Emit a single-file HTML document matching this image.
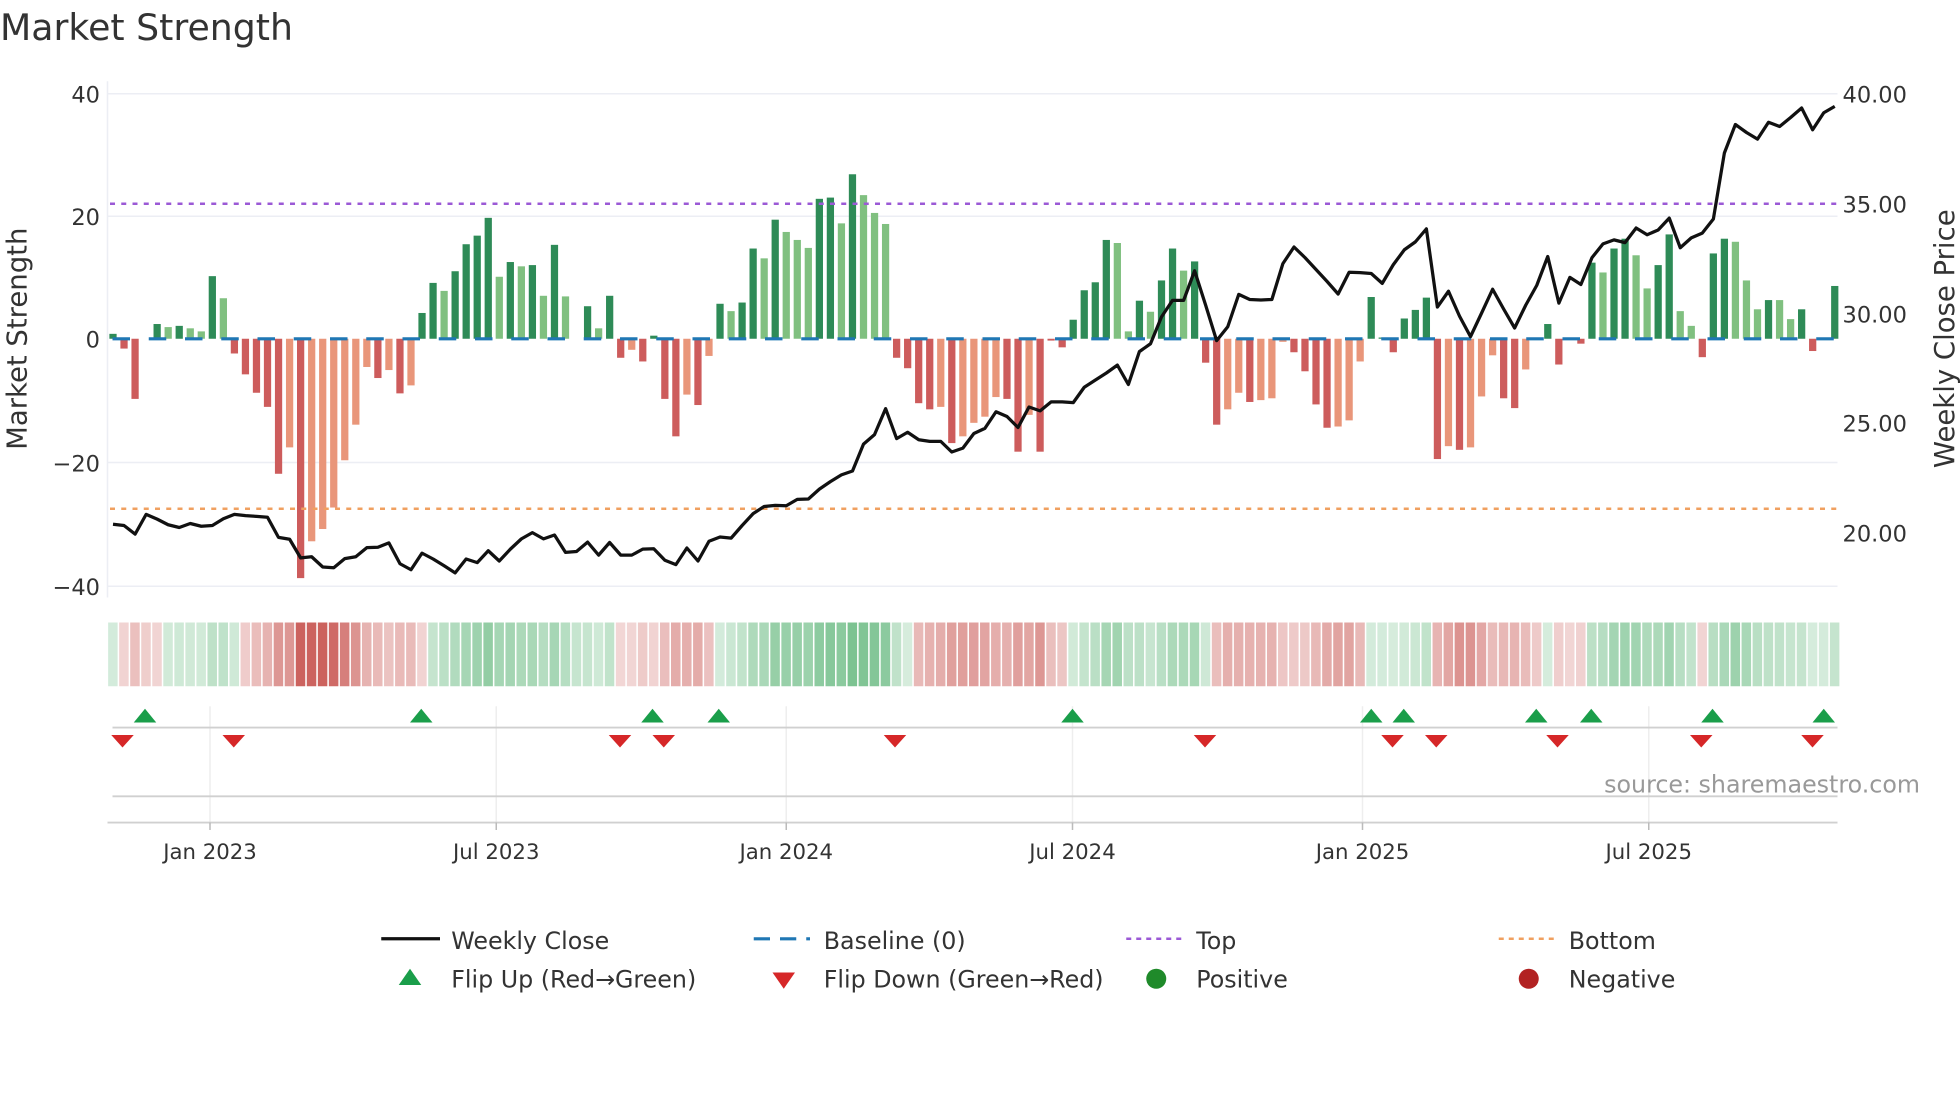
<!DOCTYPE html>
<html><head><meta charset="utf-8"><style>
html,body{margin:0;padding:0;background:#fff;}
svg{display:block;font-family:"DejaVu Sans","Liberation Sans",sans-serif;}
</style></head><body>
<svg id="s" width="1960" height="1102" viewBox="0 0 1568 881.6" xmlns="http://www.w3.org/2000/svg">
<text x="0" y="32" font-size="29" fill="#333">Market Strength</text>
<g stroke="#eceef4" stroke-width="1.2">
<line x1="86" y1="75" x2="1470" y2="75"/><line x1="86" y1="173" x2="1470" y2="173"/>
<line x1="86" y1="370" x2="1470" y2="370"/><line x1="86" y1="469" x2="1470" y2="469"/>
<line x1="86" y1="65" x2="86" y2="478"/>
</g>
<g font-size="18" fill="#333" text-anchor="end">
<text x="80" y="82">40</text><text x="80" y="180">20</text><text x="80" y="278">0</text>
<text x="80" y="377">−20</text><text x="80" y="476">−40</text>
</g>
<g font-size="18" fill="#333">
<text x="1474" y="82">40.00</text><text x="1474" y="170">35.00</text><text x="1474" y="258">30.00</text>
<text x="1474" y="345">25.00</text><text x="1474" y="433">20.00</text>
</g>
<text transform="translate(21,271) rotate(-90)" font-size="22" fill="#333" text-anchor="middle">Market Strength</text>
<text transform="translate(1563,271) rotate(-90)" font-size="22" fill="#333" text-anchor="middle">Weekly Close Price</text>
<g id="bars"></g>
<line x1="90" y1="271" x2="1470" y2="271" stroke="#1f77b4" stroke-width="2.5" stroke-dasharray="14 15"/>
<line x1="88" y1="163" x2="1470" y2="163" stroke="#9b59d6" stroke-width="2" stroke-dasharray="4 5"/>
<line x1="88" y1="407" x2="1470" y2="407" stroke="#f0a060" stroke-width="2" stroke-dasharray="4 5"/>
<polyline id="price" fill="none" stroke="#111" stroke-width="2.6" stroke-linejoin="round"/>
<g id="strip"></g>
<g stroke="#eeeeee" stroke-width="1.2">
<line x1="168" y1="565" x2="168" y2="660"/><line x1="397" y1="565" x2="397" y2="660"/>
<line x1="629" y1="565" x2="629" y2="660"/><line x1="858" y1="565" x2="858" y2="660"/>
<line x1="1090" y1="565" x2="1090" y2="660"/><line x1="1319" y1="565" x2="1319" y2="660"/>
</g>
<line x1="90" y1="582" x2="1470" y2="582" stroke="#d0d0d0" stroke-width="1.5"/>
<line x1="90" y1="637" x2="1470" y2="637" stroke="#d0d0d0" stroke-width="1.5"/>
<line x1="86" y1="658" x2="1470" y2="658" stroke="#d0d0d0" stroke-width="1.5"/>
<g stroke="#bbb" stroke-width="1.2">
<line x1="168" y1="658" x2="168" y2="664"/><line x1="397" y1="658" x2="397" y2="664"/>
<line x1="629" y1="658" x2="629" y2="664"/><line x1="858" y1="658" x2="858" y2="664"/>
<line x1="1090" y1="658" x2="1090" y2="664"/><line x1="1319" y1="658" x2="1319" y2="664"/>
</g>
<g id="marks"></g>
<text x="1536" y="634" font-size="19" fill="#999" text-anchor="end">source: sharemaestro.com</text>
<g font-size="17" fill="#333" text-anchor="middle">
<text x="168" y="687">Jan 2023</text><text x="397" y="687">Jul 2023</text><text x="629" y="687">Jan 2024</text>
<text x="858" y="687">Jul 2024</text><text x="1090" y="687">Jan 2025</text><text x="1319" y="687">Jul 2025</text>
</g>
<g font-size="19" fill="#333">
<line x1="305" y1="751" x2="352" y2="751" stroke="#111" stroke-width="2.6"/>
<text x="361" y="759">Weekly Close</text>
<line x1="603" y1="751" x2="648" y2="751" stroke="#1f77b4" stroke-width="2.5" stroke-dasharray="13 8"/>
<text x="659" y="759">Baseline (0)</text>
<line x1="901" y1="751" x2="945" y2="751" stroke="#9b59d6" stroke-width="2" stroke-dasharray="4 4"/>
<text x="957" y="759">Top</text>
<line x1="1199" y1="751" x2="1243" y2="751" stroke="#f0a060" stroke-width="2" stroke-dasharray="4 4"/>
<text x="1255" y="759">Bottom</text>
<polygon points="319,788 328,775 337,788" fill="#1a9e4a"/>
<text x="361" y="790">Flip Up (Red→Green)</text>
<polygon points="618,778 636,778 627,791" fill="#d62728"/>
<text x="659" y="790">Flip Down (Green→Red)</text>
<circle cx="925" cy="783" r="8" fill="#1f8a2a"/>
<text x="957" y="790">Positive</text>
<circle cx="1223" cy="783" r="8" fill="#b22222"/>
<text x="1255" y="790">Negative</text>
</g>
</svg>
<script>
(function(){
var NS="http://www.w3.org/2000/svg";
var d="0.8g -1.6r -9.8r 0r 2.4g 1.9l 2.1g 1.7l 1.2l 10.2g 6.6l -2.4r -5.8r -8.8r -11.1r -22r -17.7s -39r -33s -31s -27.5s -19.8s -14s -4.6s -6.4r -5.1s -8.9r -7.6s 4.2g 9.1g 7.8l 11g 15.4g 16.8g 19.7g 10.1l 12.5g 11.8l 12g 7l 15.3g 6.9l 0r 5.3g 1.7l 7g -3.1r -1.8s -3.7r 0.5g -9.8r -15.9r -9.1s -10.8r -2.8s 5.7g 4.5l 5.9g 14.7g 13.1l 19.4g 17.4l 16.1l 14.8l 22.8g 23g 18.8l 26.8g 23.4l 20.5l 18.7l -3.1r -4.8r -10.5r -11.5r -11.1s -17r -15.9s -13.7s -12.7s -9.5s -9.8r -18.4r -12.4s -18.4r -0.3r -1.4r 3.1g 7.9g 9.2g 16.1g 15.6l 1.2l 6.2g 4.4l 9.5g 14.7g 11.1l 12.6g -3.9r -14r -11.5s -8.8s -10.3r -10s -9.7s -0.5s -2.2r -5.3r -10.7r -14.5r -14.3s -13.3s -3.7s 6.8g 0.2g -2.2r 3.3g 4.7g 6.7g -19.6r -17.5s -18.1r -17.7s -9.4s -2.7s -9.7r -11.3r -5s 0r 2.4g -4.2r 0r -0.8r 12.4g 10.8l 14.7g 16.3g 13.6l 8.2l 12g 17g 4.5l 2.1l -3r 13.9g 16.3g 15.8l 9.5l 4.8l 6.3g 6.3l 3.2l 4.8g -2r 0r 8.6g".split(" ");
var col={g:"#2e8b57",l:"#80c080",r:"#cd5c5c",s:"#e9967a"};
var bars=document.getElementById("bars"),strip=document.getElementById("strip");
var n=d.length;
var x0=90.4,sp=(1467.8-x0)/(n-1),z=271,k=4.91;
var vals=[];
d.forEach(function(t,i){
 var v=parseFloat(t),c=t.slice(-1);vals.push(v);
 var x=x0+i*sp;
 if(Math.abs(v)>0.05){
  var r=document.createElementNS(NS,"rect");
  var h=Math.abs(v)*k;
  r.setAttribute("x",x-2.9);r.setAttribute("width",5.8);
  r.setAttribute("y",v>0?z-h:z);r.setAttribute("height",h);
  r.setAttribute("fill",col[c]);bars.appendChild(r);
 }
});
vals.forEach(function(v,i){
 var a=0,m2=0;for(var j=Math.max(0,i-2);j<=i;j++){a+=vals[j];m2++;}
 var m=(a/m2*0.6+v*0.4);
 var x=x0+i*sp;
 var r=document.createElementNS(NS,"rect");
 r.setAttribute("x",x-3.9);r.setAttribute("width",7.6);
 r.setAttribute("y",498);r.setAttribute("height",51);
 var al=Math.min(0.85,0.22+Math.abs(m)/30*0.6);
 r.setAttribute("fill",m>=0?"rgba(70,170,100,"+al+")":"rgba(195,70,65,"+al+")");
 strip.appendChild(r);
});
var p1=[1125,1128,1150,1100,1112,1126,1133,1123,1130,1128,1111,1100,1103,1105,1107,1158,1163,1210,1207,1233,1235,1212,1207,1184,1183,1172,1225,1240,1198,1213,1230,1248,1213,1222,1192,1218,1188,1162,1146,1162,1152,1196,1194,1170,1203,1171,1203,1203,1188,1187,1216,1227,1185,1218];
var p2=[1168,1157,1160,1128,1098,1080,1077,1078,1062,1061,1036,1017,1000,990,922,898,832,908,892,911,915,915,942,932,895,882,840,852,880,828,838,815,815,817,778,760,742,722,771,688,668,600,558,558,483,570,660,625,543,556,557,556];
var p3=[465,423,450,480,510,542,487,488,490,515,468,430,410,377,575,535,598,650,590,530,580,628,570,520,447,565,500,518,450,415,405,412,375,392,380,350,425,400,388,352,185,113,133,150,107,118,95,71,126,83,67];
var all=p1.concat(p2).concat(p3);
var psp=(1467.8-x0)/(all.length-1);
var pts=all.map(function(v,i){return (x0+i*psp).toFixed(1)+","+(75+(v-35)*0.316).toFixed(1);});
document.getElementById("price").setAttribute("points",pts.join(" "));
var mk=document.getElementById("marks");
[116,337,522,575,858,1097,1123,1229,1273,1370,1459].forEach(function(x){
 var p=document.createElementNS(NS,"polygon");
 p.setAttribute("points",(x-9)+",578 "+x+",567 "+(x+9)+",578");p.setAttribute("fill","#1a9e4a");mk.appendChild(p);});
[98,187,496,531,716,964,1114,1149,1246,1361,1450].forEach(function(x){
 var p=document.createElementNS(NS,"polygon");
 p.setAttribute("points",(x-9)+",588 "+(x+9)+",588 "+x+",598");p.setAttribute("fill","#d62728");mk.appendChild(p);});
})();
</script>
</body></html>
